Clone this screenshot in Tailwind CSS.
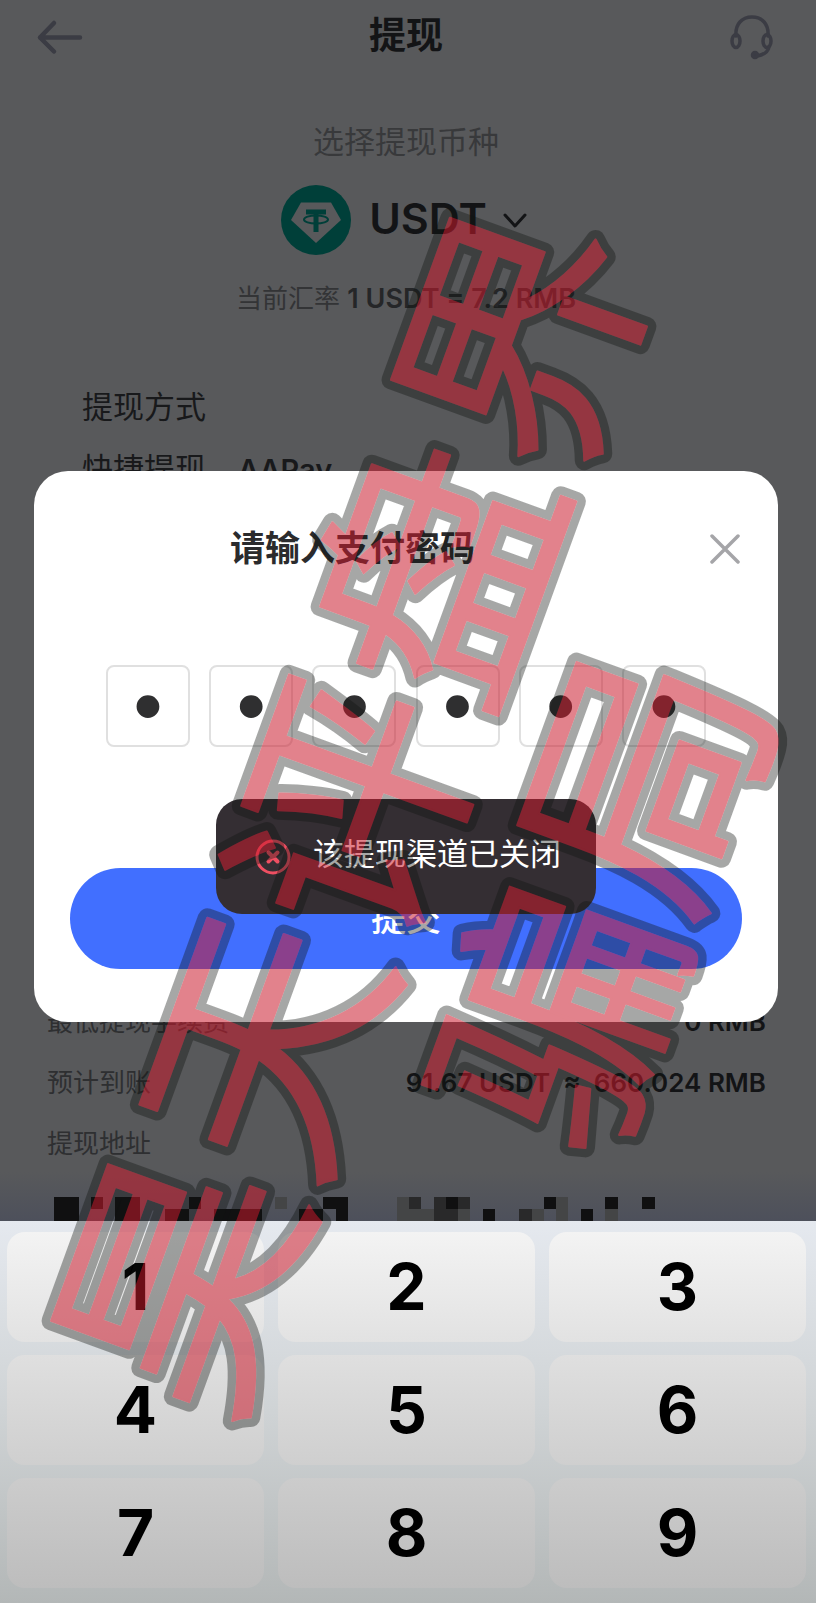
<!DOCTYPE html>
<html lang="zh-CN">
<head>
    <meta charset="UTF-8">
    <meta name="viewport" content="width=device-width, initial-scale=1.0">
    <title>提现</title>
    <script src="https://cdn.jsdelivr.net/npm/@tailwindcss/browser@4"></script>
</head>
<body class="relative min-h-screen overflow-x-hidden bg-[#58595b] font-['Inter','Noto_Sans_CJK_SC',sans-serif]">

    <!-- Página de retiro -->
    <header class="flex h-[72px] items-center justify-between pr-10 pl-9 text-[#3b3c44]">
        <button type="button" aria-label="返回">
            <svg class="h-12 w-12" viewBox="0 0 48 48" fill="none" stroke="currentColor" stroke-width="4.500" stroke-linecap="round" stroke-linejoin="round"><path d="M44 25.500H4M18 11 4 25.500 18 39.500"/></svg>
        </button>
        <h1 class="text-[37px] font-bold text-[#131416]">提现</h1>
        <button type="button" aria-label="客服">
            <svg class="h-12 w-12" viewBox="0 0 48 48" fill="none" stroke="currentColor" stroke-width="3.500" stroke-linecap="round"><path d="M8 24C7 12 14 5 24 5s17 7 16 19"/><ellipse cx="8" cy="29" rx="4" ry="6.500"/><ellipse cx="39" cy="29" rx="4" ry="6.500"/><path d="M41 35c-1 5-6 8-12 9"/><circle cx="27" cy="43" r="2.500" fill="currentColor"/></svg>
        </button>
    </header>

    <main class="pb-[382px]">
        <section class="flex flex-col items-center pt-12 pr-1">
            <p class="text-[31px] leading-[44px] text-[#38393b]">选择提现币种</p>
            <button type="button" class="mt-[21px] flex h-[70px] items-center pr-1 text-[#131416]">
                <svg class="h-[70px] w-[70px]" viewBox="0 0 70 70"><circle cx="35" cy="35" r="35" fill="#003f39"/><path d="M20 17.500h30L60 35 35 58 10 35z" fill="#58595b"/><path d="M25 24.500h20v5h-7.500V47h-5V29.500H25z" fill="#003f39"/><ellipse cx="35" cy="34.500" rx="12" ry="4" fill="none" stroke="#003f39" stroke-width="2"/></svg>
                <span class="ml-[18px] pb-1 text-[43px] font-semibold">USDT</span>
                <svg class="ml-4 h-6 w-6" viewBox="0 0 24 24" fill="none" stroke="currentColor" stroke-width="3" stroke-linecap="round" stroke-linejoin="round"><path d="M2 7l10 11L22 7"/></svg>
            </button>
            <p class="mt-6 text-[26px] leading-10 text-[#333436]">当前汇率 <b class="text-[27px] font-semibold text-[#252628]">1 USDT = 7.2 RMB</b></p>
        </section>

        <section class="mt-[66px] px-[82px] text-[31px] leading-[44px] text-[#18191b]">
            <h2>提现方式</h2>
            <p class="mt-[18px]">快捷提现<b class="ml-8 text-[29px] font-semibold">AAPay</b></p>
        </section>

        <dl class="mt-[510px] grid grid-cols-[auto_1fr] gap-y-[21px] pr-[50px] pl-[47px] text-[26px] leading-10 text-[#2e2f31]">
            <dt>最低提现手续费</dt>
            <dd class="text-right font-semibold text-[#131416]">0 RMB</dd>
            <dt>预计到账</dt>
            <dd class="text-right font-semibold whitespace-pre text-[#131416]">91.67 USDT  ≈  660.024 RMB</dd>
            <dt>提现地址</dt>
            <dd></dd>
        </dl>

        <div class="mt-2 bg-linear-to-b from-[#58595b] to-[#4d505b] pt-[25px]">
            <svg class="h-6 w-full" viewBox="0 0 816 24" fill="#101011">
                <path d="M54 0h25v24H54zM91 0h12v12H91zM115 0h25v24h-25zM189 0h12v12h-12zM165 12h24v12h-24zM214 12h48v12h-48zM323 0h25v24h-12V12h-13zM299 12h24v12h-24zM446 0h12v12h-12zM544 0h12v12h-12zM605 0h13v12h-13zM642 0h13v12h-13zM483 12h12v12h-12zM581 12h12v12h-12z"/>
                <path fill="#29292a" d="M409 0h12v12h-12zM434 0h12v12h-12zM458 0h12v12h-12zM434 12h24v12h-24zM519 12h13v12h-13z"/>
                <path fill="#444546" d="M275 0h12v12h-12zM397 0h12v24h-12zM409 12h25v12h-25zM458 12h12v12h-12zM532 12h12v12h-12zM556 0h12v24h-12zM605 12h13v12h-13z"/>
            </svg>
        </div>
    </main>

    <!-- Ventana de contraseña -->
    <form class="absolute inset-x-[34px] top-[471px] mr-1 rounded-[34px] bg-white px-9 pt-[46px] pb-[53px]">
        <div class="flex h-[62px] items-center">
            <h2 class="ml-[160px] text-[35px] font-bold text-[#2b2b2d]">请输入支付密码</h2>
            <button type="button" aria-label="关闭" class="mr-px ml-auto text-[#a5a5a8]">
                <svg class="h-8 w-8" viewBox="0 0 32 32" fill="none" stroke="currentColor" stroke-width="3.500" stroke-linecap="round"><path d="M3 4l26 26M29 4L3 30"/></svg>
            </button>
        </div>
        <div class="mx-auto mt-[86px] flex max-w-[600px] justify-between text-[#2f2f30]">
            <input type="password" aria-label="密码第1位" value="1" maxlength="1" class="h-[82px] w-[84px] rounded-lg border-2 border-[#e0e0e0] pb-0.5 text-center font-['Liberation_Sans',sans-serif] text-[84px] leading-none">
            <input type="password" aria-label="密码第2位" value="1" maxlength="1" class="h-[82px] w-[84px] rounded-lg border-2 border-[#e0e0e0] pb-0.5 text-center font-['Liberation_Sans',sans-serif] text-[84px] leading-none">
            <input type="password" aria-label="密码第3位" value="1" maxlength="1" class="h-[82px] w-[84px] rounded-lg border-2 border-[#e0e0e0] pb-0.5 text-center font-['Liberation_Sans',sans-serif] text-[84px] leading-none">
            <input type="password" aria-label="密码第4位" value="1" maxlength="1" class="h-[82px] w-[84px] rounded-lg border-2 border-[#e0e0e0] pb-0.5 text-center font-['Liberation_Sans',sans-serif] text-[84px] leading-none">
            <input type="password" aria-label="密码第5位" value="1" maxlength="1" class="h-[82px] w-[84px] rounded-lg border-2 border-[#e0e0e0] pb-0.5 text-center font-['Liberation_Sans',sans-serif] text-[84px] leading-none">
            <input type="password" aria-label="密码第6位" value="1" maxlength="1" class="h-[82px] w-[84px] rounded-lg border-2 border-[#e0e0e0] pb-0.5 text-center font-['Liberation_Sans',sans-serif] text-[84px] leading-none">
        </div>
        <button type="submit" class="mt-[121px] h-[101px] w-full rounded-full bg-[#416fff] text-[35px] font-medium text-white">提交</button>
    </form>

    <!-- Aviso -->
    <div role="alert" class="absolute top-[799px] left-1/2 -ml-48 flex h-[115px] w-[380px] items-center gap-[22px] rounded-[26px] bg-[#342e33] pl-[39px] text-[31px] whitespace-nowrap text-white">
        <svg class="h-9 w-9 shrink-0" viewBox="0 0 36 36" fill="none" stroke="#ef4f62" stroke-width="3" stroke-linecap="round"><circle cx="18" cy="18" r="16"/><path stroke-width="4" d="M13.500 13.500l9 9M22.500 13.500l-9 9"/></svg>
        <span class="pb-1">该提现渠道已关闭</span>
    </div>

    <!-- Teclado -->
    <div class="absolute inset-x-0 bottom-0 grid grid-cols-3 gap-x-3.5 gap-y-[13px] bg-linear-to-b from-[#e5e9ef] via-[#cfd3d5] to-[#b3b7b7] pt-[11px] pr-2.5 pb-[15px] pl-[7px] text-[64px] leading-none font-bold text-black">
        <button type="button" class="h-[110px] rounded-[18px] bg-linear-to-b from-[#f3f3f3] to-[#e2e2e2]">1</button>
        <button type="button" class="h-[110px] rounded-[18px] bg-linear-to-b from-[#f3f3f3] to-[#e2e2e2]">2</button>
        <button type="button" class="h-[110px] rounded-[18px] bg-linear-to-b from-[#f3f3f3] to-[#e2e2e2]">3</button>
        <button type="button" class="h-[110px] rounded-[18px] bg-linear-to-b from-[#dfdfdf] to-[#cfcfcf]">4</button>
        <button type="button" class="h-[110px] rounded-[18px] bg-linear-to-b from-[#dfdfdf] to-[#cfcfcf]">5</button>
        <button type="button" class="h-[110px] rounded-[18px] bg-linear-to-b from-[#dfdfdf] to-[#cfcfcf]">6</button>
        <button type="button" class="h-[110px] rounded-[18px] bg-linear-to-b from-[#cccccc] to-[#bdbdbd]">7</button>
        <button type="button" class="h-[110px] rounded-[18px] bg-linear-to-b from-[#cccccc] to-[#bdbdbd]">8</button>
        <button type="button" class="h-[110px] rounded-[18px] bg-linear-to-b from-[#cccccc] to-[#bdbdbd]">9</button>
    </div>

    <!-- Marca de agua: contorno gris recortado + relleno rojo -->
    <svg class="pointer-events-none absolute inset-0 h-full w-full font-['Noto_Sans_CJK_SC',sans-serif]" viewBox="0 0 816 1603" stroke-linejoin="round">
        <defs>
            <g id="mark" text-anchor="middle">
                <text font-size="251" transform="translate(351 808) rotate(-70)" y="94">昊天评盘界</text>
                <text font-size="252" transform="translate(604 898) rotate(-70)" y="92">骗局</text>
            </g>
            <mask id="cut" maskUnits="userSpaceOnUse" x="0" y="0" width="816" height="1603">
                <rect width="816" height="1603" fill="white"/>
                <use href="#mark" fill="black" stroke="black" stroke-width="2"/>
            </mask>
        </defs>
        <g mask="url(#cut)" opacity="0.37"><use href="#mark" fill="#101411" stroke="#101411" stroke-width="19"/></g>
        <g opacity="0.54"><use href="#mark" fill="#ca1a2c" stroke="#ca1a2c" stroke-width="2"/></g>
    </svg>

</body>
</html>
